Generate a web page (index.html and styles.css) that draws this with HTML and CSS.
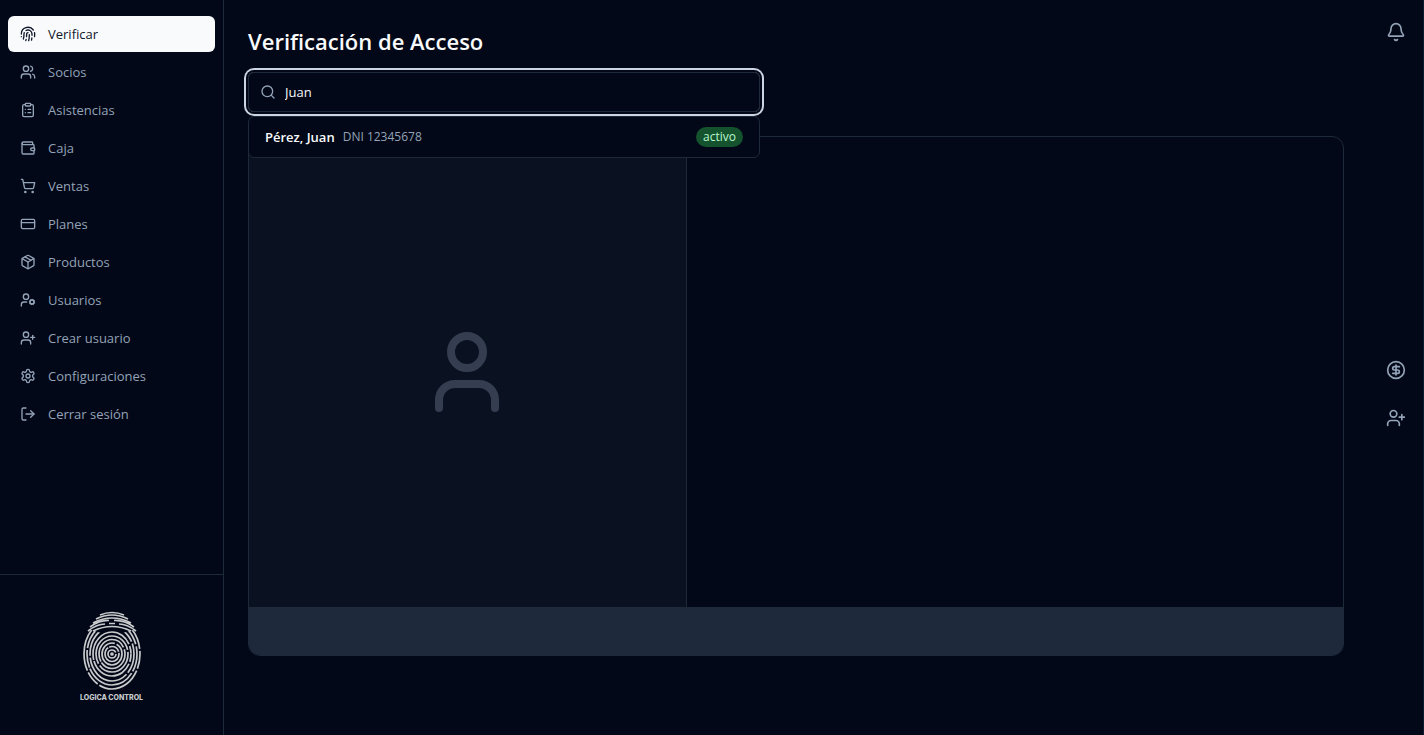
FILE: index.html
```html
<!DOCTYPE html>
<html lang="es">
<head>
    <meta charset="UTF-8">
    <meta name="viewport" content="width=device-width, initial-scale=1.0">
    <title>Verificación de Acceso</title>
    <link rel="stylesheet" href="styles.css">
</head>
<body>
    <aside class="sidebar">
        <nav class="menu">
            <a href="#" class="active">
                <svg class="icon" viewBox="0 0 24 24"><path d="M12 10a2 2 0 0 0-2 2c0 1.02-.1 2.51-.26 4"/><path d="M14 13.12c0 2.38 0 6.38-1 8.88"/><path d="M17.29 21.02c.12-.6.43-2.3.5-3.02"/><path d="M2 12a10 10 0 0 1 18-6"/><path d="M2 16h.01"/><path d="M21.8 16c.2-2 .131-5.354 0-6"/><path d="M5 19.5C5.5 18 6 15 6 12a6 6 0 0 1 .34-2"/><path d="M8.65 22c.21-.66.45-1.32.57-2"/><path d="M9 6.8a6 6 0 0 1 9 5.2v2"/></svg>
                Verificar
            </a>
            <a href="#">
                <svg class="icon" viewBox="0 0 24 24"><path d="M16 21v-2a4 4 0 0 0-4-4H6a4 4 0 0 0-4 4v2"/><circle cx="9" cy="7" r="4"/><path d="M22 21v-2a4 4 0 0 0-3-3.87"/><path d="M16 3.13a4 4 0 0 1 0 7.75"/></svg>
                Socios
            </a>
            <a href="#">
                <svg class="icon" viewBox="0 0 24 24"><rect x="8" y="2" width="8" height="4" rx="1"/><path d="M16 4h2a2 2 0 0 1 2 2v14a2 2 0 0 1-2 2H6a2 2 0 0 1-2-2V6a2 2 0 0 1 2-2h2"/><path d="M12 11h4"/><path d="M12 16h4"/><path d="M8 11h.01"/><path d="M8 16h.01"/></svg>
                Asistencias
            </a>
            <a href="#">
                <svg class="icon" viewBox="0 0 24 24"><path d="M19 7V4a1 1 0 0 0-1-1H5a2 2 0 0 0 0 4h15a1 1 0 0 1 1 1v4h-3a2 2 0 0 0 0 4h3a1 1 0 0 0 1-1v-2a1 1 0 0 0-1-1"/><path d="M3 5v14a2 2 0 0 0 2 2h15a1 1 0 0 0 1-1v-4"/></svg>
                Caja
            </a>
            <a href="#">
                <svg class="icon" viewBox="0 0 24 24"><circle cx="8" cy="21" r="1"/><circle cx="19" cy="21" r="1"/><path d="M2.05 2.05h2l2.66 12.42a2 2 0 0 0 2 1.58h9.78a2 2 0 0 0 1.95-1.57l1.65-7.43H5.12"/></svg>
                Ventas
            </a>
            <a href="#">
                <svg class="icon" viewBox="0 0 24 24"><rect x="2" y="5" width="20" height="14" rx="2"/><path d="M2 10h20"/></svg>
                Planes
            </a>
            <a href="#">
                <svg class="icon" viewBox="0 0 24 24"><path d="M11 21.73a2 2 0 0 0 2 0l7-4A2 2 0 0 0 21 16V8a2 2 0 0 0-1-1.73l-7-4a2 2 0 0 0-2 0l-7 4A2 2 0 0 0 3 8v8a2 2 0 0 0 1 1.73z"/><path d="M12 22V12"/><path d="M3.29 7 12 12l8.71-5"/><path d="m7.5 4.27 9 5.15"/></svg>
                Productos
            </a>
            <a href="#">
                <svg class="icon" viewBox="0 0 24 24"><circle cx="9" cy="7" r="4"/><path d="M10 15H6a4 4 0 0 0-4 4v2"/><circle cx="18" cy="15" r="3"/><path d="m21.7 16.4-.9-.3"/><path d="m15.2 13.9-.9-.3"/><path d="m16.6 18.7.3-.9"/><path d="m19.1 12.2.3-.9"/><path d="m19.6 18.7-.4-1"/><path d="m16.8 12.3-.4-1"/><path d="m14.3 16.6 1-.4"/><path d="m20.7 13.8 1-.4"/></svg>
                Usuarios
            </a>
            <a href="#">
                <svg class="icon" viewBox="0 0 24 24"><path d="M16 21v-2a4 4 0 0 0-4-4H6a4 4 0 0 0-4 4v2"/><circle cx="9" cy="7" r="4"/><path d="M19 8v6"/><path d="M22 11h-6"/></svg>
                Crear usuario
            </a>
            <a href="#">
                <svg class="icon" viewBox="0 0 24 24"><path d="M12.22 2h-.44a2 2 0 0 0-2 2v.18a2 2 0 0 1-1 1.73l-.43.25a2 2 0 0 1-2 0l-.15-.08a2 2 0 0 0-2.73.73l-.22.38a2 2 0 0 0 .73 2.73l.15.1a2 2 0 0 1 1 1.72v.51a2 2 0 0 1-1 1.74l-.15.09a2 2 0 0 0-.73 2.73l.22.38a2 2 0 0 0 2.73.73l.15-.08a2 2 0 0 1 2 0l.43.25a2 2 0 0 1 1 1.73V20a2 2 0 0 0 2 2h.44a2 2 0 0 0 2-2v-.18a2 2 0 0 1 1-1.73l.43-.25a2 2 0 0 1 2 0l.15.08a2 2 0 0 0 2.73-.73l.22-.39a2 2 0 0 0-.73-2.73l-.15-.08a2 2 0 0 1-1-1.74v-.5a2 2 0 0 1 1-1.74l.15-.09a2 2 0 0 0 .73-2.73l-.22-.38a2 2 0 0 0-2.73-.73l-.15.08a2 2 0 0 1-2 0l-.43-.25a2 2 0 0 1-1-1.73V4a2 2 0 0 0-2-2z"/><circle cx="12" cy="12" r="3"/></svg>
                Configuraciones
            </a>
            <a href="#">
                <svg class="icon" viewBox="0 0 24 24"><path d="M9 21H5a2 2 0 0 1-2-2V5a2 2 0 0 1 2-2h4"/><path d="m16 17 5-5-5-5"/><path d="M21 12H9"/></svg>
                Cerrar sesión
            </a>
        </nav>
        <div class="brand">
            <svg class="logo" viewBox="0 0 58 80">
                <clipPath id="sides"><path d="M0 21L8 19L29 25L50 19L58 21V80H0z"/></clipPath>
                <!-- arches on top -->
                <path d="M17 4Q29-1 41 4M13 8Q29 0 45 8M10 12Q29 2 48 12M7 16Q17 9 26 9.500M31 9.500Q41 9 51 16M5 20Q14 13 22 13M26 12.500h6M36 13Q44 13 53 20M10 20Q29 11 48 20"/>
                <!-- rings -->
                <circle cx="29" cy="43" r="1"/>
                <ellipse cx="29" cy="43" rx="4" ry="4" stroke-dasharray="23 2"/>
                <ellipse cx="29" cy="43" rx="7" ry="7.500" stroke-dasharray="30 1 12 1"/>
                <ellipse cx="29" cy="43" rx="10" ry="11" stroke-dasharray="52 2"/>
                <ellipse cx="29" cy="43" rx="13" ry="14.500" stroke-dasharray="34 1 44 2"/>
                <ellipse cx="29" cy="43" rx="16" ry="18" stroke-dasharray="41 2 59 2"/>
                <ellipse cx="29" cy="43" rx="19" ry="22" stroke-dasharray="8 2 47 1 60 2"/>
                <ellipse cx="29" cy="43" rx="22" ry="27" stroke-dasharray="20 2 51 2 66 2" clip-path="url(#sides)"/>
                <ellipse cx="29" cy="43" rx="25" ry="31" stroke-dasharray="18 2 53 1" clip-path="url(#sides)"/>
                <ellipse cx="29" cy="43" rx="28" ry="35" stroke-dasharray="15 2 46 2" clip-path="url(#sides)"/>
            </svg>
            <span>LOGICA CONTROL</span>
        </div>
    </aside>

    <main class="content">
        <h1>Verificación de Acceso</h1>
        <div class="search">
            <label class="searchBox">
                <svg class="icon" viewBox="0 0 24 24"><circle cx="11" cy="11" r="8"/><path d="m21 21-4.3-4.3"/></svg>
                <input type="text" name="socio" value="Juan" aria-label="Buscar socio" autocomplete="off">
            </label>
            <div class="results">
                <button type="button" class="result">
                    <strong>Pérez, Juan</strong>
                    <span class="dni">DNI 12345678</span>
                    <span class="badge">activo</span>
                </button>
            </div>
        </div>
        <section class="card">
            <div class="photo">
                <svg class="avatar" viewBox="0 0 24 24"><path d="M19 21v-2a4 4 0 0 0-4-4H9a4 4 0 0 0-4 4v2"/><circle cx="12" cy="7" r="4"/></svg>
            </div>
            <div class="detail"></div>
            <div class="status"></div>
        </section>
    </main>

    <div class="rail">
        <button type="button" aria-label="Notificaciones">
            <svg class="icon" viewBox="0 0 24 24"><path d="M10.268 21a2 2 0 0 0 3.464 0"/><path d="M3.262 15.326A1 1 0 0 0 4 17h16a1 1 0 0 0 .74-1.673C19.41 13.956 18 12.499 18 8A6 6 0 0 0 6 8c0 4.499-1.411 5.956-2.738 7.326"/></svg>
        </button>
        <div class="quick">
            <button type="button" aria-label="Registrar pago">
                <svg class="icon" viewBox="0 0 24 24"><circle cx="12" cy="12" r="10"/><path d="M16 8h-6a2 2 0 1 0 0 4h4a2 2 0 1 1 0 4H8"/><path d="M12 18V6"/></svg>
            </button>
            <button type="button" aria-label="Nuevo socio">
                <svg class="icon" viewBox="0 0 24 24"><path d="M16 21v-2a4 4 0 0 0-4-4H6a4 4 0 0 0-4 4v2"/><circle cx="9" cy="7" r="4"/><path d="M19 8v6"/><path d="M22 11h-6"/></svg>
            </button>
        </div>
    </div>
</body>
</html>
```
FILE: styles.css
```css
*{
    margin: 0;
    padding: 0;
    box-sizing: border-box;
}
body{
    display: flex;
    min-height: 100vh;
    background-color: #020817;
    color: #f8fafc;
    font-family: "Segoe UI", "Open Sans", "Noto Sans", sans-serif;
    font-size: 13px;
    line-height: 20px;
}
button, input{
    font: inherit;
    color: inherit;
    background: none;
    border: none;
}
svg{
    fill: none;
    stroke: currentColor;
    stroke-width: 2;
    stroke-linecap: round;
    stroke-linejoin: round;
}
.icon{
    width: 16px;
    height: 16px;
    flex-shrink: 0;
}

/* sidebar */
.sidebar{
    display: flex;
    flex-direction: column;
    width: 224px;
    flex-shrink: 0;
    border-right: 1px solid #1e293b;
}
.menu{
    flex: 1;
    display: flex;
    flex-direction: column;
    gap: 2px;
    padding: 16px 8px;
}
.menu a{
    display: flex;
    align-items: center;
    gap: 12px;
    padding: 8px 12px;
    border-radius: 6px;
    color: #94a3b8;
    text-decoration: none;
}
.menu a.active{
    background-color: #f8fafc;
    color: #0f172a;
}
.brand{
    display: flex;
    flex-direction: column;
    align-items: center;
    gap: 2px;
    height: 161px;
    padding-top: 36px;
    border-top: 1px solid #1e293b;
    color: #c8cacc;
}
.logo{
    width: 58px;
    height: 80px;
    stroke-width: 1.7;
    stroke-linecap: butt;
}
.brand span{
    font-family: Inter, sans-serif;
    font-size: 7px;
    font-weight: 800;
    line-height: 10px;
}

/* main */
.content{
    flex: 1;
    display: flex;
    flex-direction: column;
    padding: 24px;
}
h1{
    margin-bottom: 14px;
    font-size: 22px;
    font-weight: 600;
    line-height: 34px;
}
.search{
    position: relative;
    max-width: 512px;
    margin-bottom: 24px;
}
.searchBox{
    display: flex;
    align-items: center;
    gap: 9px;
    height: 40px;
    padding: 0 11px;
    border: 1px solid #1e293b;
    border-radius: 6px;
    box-shadow: 0 0 0 2px #020817, 0 0 0 4px #cbd5e1;
}
.searchBox .icon{
    color: #94a3b8;
}
.searchBox input{
    flex: 1;
    outline: none;
}
.results{
    position: absolute;
    top: 100%;
    left: 0;
    right: 0;
    margin-top: 4px;
    border: 1px solid #1e293b;
    border-radius: 6px;
    background-color: #020817;
}
.result{
    display: flex;
    align-items: center;
    gap: 8px;
    width: 100%;
    padding: 10px 16px;
}
.result strong{
    font-weight: 600;
}
.dni{
    color: #94a3b8;
    font-size: 12px;
}
.badge{
    margin-left: auto;
    padding: 0 7px;
    border-radius: 10px;
    background-color: #14532d;
    color: #bbf7d0;
    font-size: 12px;
}
.card{
    display: grid;
    grid-template-columns: 2fr 3fr;
    grid-template-rows: 470px 48px;
    border: 1px solid #1e293b;
    border-radius: 12px;
    overflow: hidden;
}
.photo{
    display: flex;
    align-items: center;
    justify-content: center;
    border-right: 1px solid #1e293b;
    background-color: #0a1120;
}
.avatar{
    width: 96px;
    height: 96px;
    color: #353e50;
}
.status{
    grid-column: 1 / 3;
    background-color: #1e293b;
}

/* right rail */
.rail{
    display: flex;
    flex-direction: column;
    width: 56px;
    padding: 12px 8px 0;
    color: #94a3b8;
    border-right: 1px solid #0c1c33;
}
.rail button{
    display: flex;
    align-items: center;
    justify-content: center;
    width: 40px;
    height: 40px;
    border-radius: 6px;
}
.rail .icon{
    width: 20px;
    height: 20px;
}
.quick{
    flex: 1;
    display: flex;
    flex-direction: column;
    justify-content: center;
    gap: 8px;
}
```
